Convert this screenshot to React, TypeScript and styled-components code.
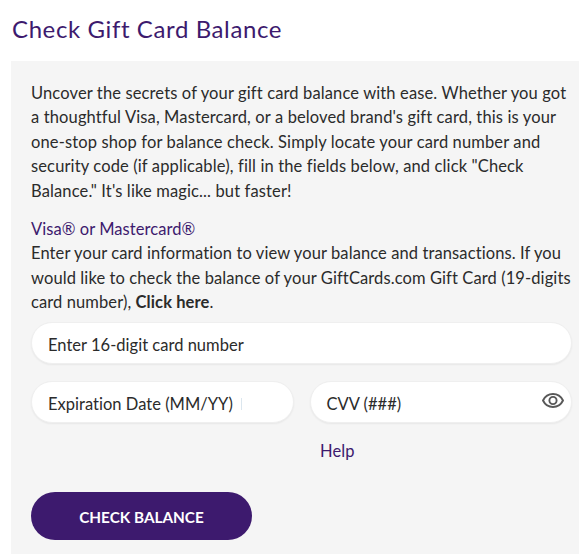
import React from 'react'
import styled, { createGlobalStyle } from 'styled-components'

const GlobalStyle = createGlobalStyle`
  html, body {
    margin: 0;
    padding: 0;
    background: #fff;
    overflow: hidden;
  }

  body {
    font-family: Lato, "Open Sans", sans-serif;
    color: #2b2b2b;
  }
`

const EyeIcon = () => (
  <svg width="22" height="15" viewBox="0 0 22 15" fill="none" stroke="#585858" strokeWidth="1.9">
    <path d="M1 7.5C3 3.4 6.6 1 11 1S19 3.4 21 7.5C19 11.6 15.4 14 11 14S3 11.6 1 7.5Z" />
    <circle cx="11" cy="7.5" r="3.6" />
  </svg>
)

const App: React.FC = () => {
  return (
    <Page>
      <GlobalStyle />
      <Title>Check Gift Card Balance</Title>
      <Panel>
        <Intro>
          Uncover the secrets of your gift card balance with ease. Whether you got a thoughtful Visa, Mastercard, or a
          beloved brand's gift card, this is your one-stop shop for balance check. Simply locate your card number and
          security code (if applicable), fill in the fields below, and click "Check Balance." It's like magic... but
          faster!
        </Intro>

        <Subheading>Visa® or Mastercard®</Subheading>
        <Info>
          Enter your card information to view your balance and transactions. If you would like to check the balance of
          your GiftCards.com Gift Card (19-digits card number), <strong>Click here</strong>.
        </Info>

        <Form>
          <Field>Enter 16-digit card number</Field>
          <FieldRow>
            <Field>
              Expiration Date (MM/YY)
              <Caret />
            </Field>
            <Field>
              CVV (###)
              <EyeButton>
                <EyeIcon />
              </EyeButton>
            </Field>
          </FieldRow>
          <HelpRow>
            <HelpLink>Help</HelpLink>
          </HelpRow>
          <SubmitButton>CHECK BALANCE</SubmitButton>
        </Form>
      </Panel>
    </Page>
  )
}

const Page = styled.div`
  height: 554px;
  padding-left: 11px;
  box-sizing: border-box;
  overflow: hidden;
`

const Title = styled.h1`
  margin: 0;
  padding: 13px 0 16px 1px;
  font-size: 24px;
  line-height: 32px;
  font-weight: 400;
  letter-spacing: 0.6px;
  color: #3d1a6e;
`

const Panel = styled.section`
  padding: 20px 7px 14px 20px;
  background: #f5f5f5;
  height: 493px;
  box-sizing: border-box;
`

const Intro = styled.p`
  margin: 0 0 14px;
  font-size: 16.5px;
  line-height: 24.4px;
  letter-spacing: 0.13px;
`

const Subheading = styled.div`
  font-size: 16.5px;
  line-height: 24.4px;
  letter-spacing: 0.06px;
  color: #3d1a6e;
`

const Info = styled.p`
  margin: 0 0 7px;
  font-size: 16.5px;
  line-height: 24.4px;
  letter-spacing: 0.1px;

  strong {
    font-weight: 700;
  }
`

const Form = styled.form`
  display: flex;
  flex-direction: column;
  gap: 17px;
`

const FieldRow = styled.div`
  display: grid;
  grid-template-columns: 1fr 1fr;
  gap: 16px;
`

const Field = styled.div`
  position: relative;
  display: flex;
  align-items: center;
  padding: 4px 16px 0;
  background: #fff;
  border: 1px solid #efefef;
  border-radius: 21px;
  box-shadow: 0 1px 2px rgba(0, 0, 0, 0.06);
  box-sizing: content-box;
  height: 36px;
  font-size: 16.5px;
  letter-spacing: 0.02px;
  color: #2b2b2b;
  min-width: 0;
`

const Caret = styled.span`
  width: 1px;
  height: 12px;
  margin-left: 8px;
  background: #dbe6ee;
`

const EyeButton = styled.span`
  position: absolute;
  top: 11px;
  right: 7px;
  display: flex;
`

const HelpRow = styled.div`
  display: flex;
  justify-content: flex-start;
  margin: 0 0 0 289px;
`

const HelpLink = styled.a`
  font-size: 16.5px;
  line-height: 22px;
  letter-spacing: 0.1px;
  color: #3d1a6e;
`

const SubmitButton = styled.button`
  width: 221px;
  height: 48px;
  margin-top: 13px;
  padding: 3px 0 0;
  border: 0;
  border-radius: 24px;
  background: #3d1a6e;
  color: #fff;
  font-family: inherit;
  font-size: 15.3px;
  font-weight: 700;
`

export default App
